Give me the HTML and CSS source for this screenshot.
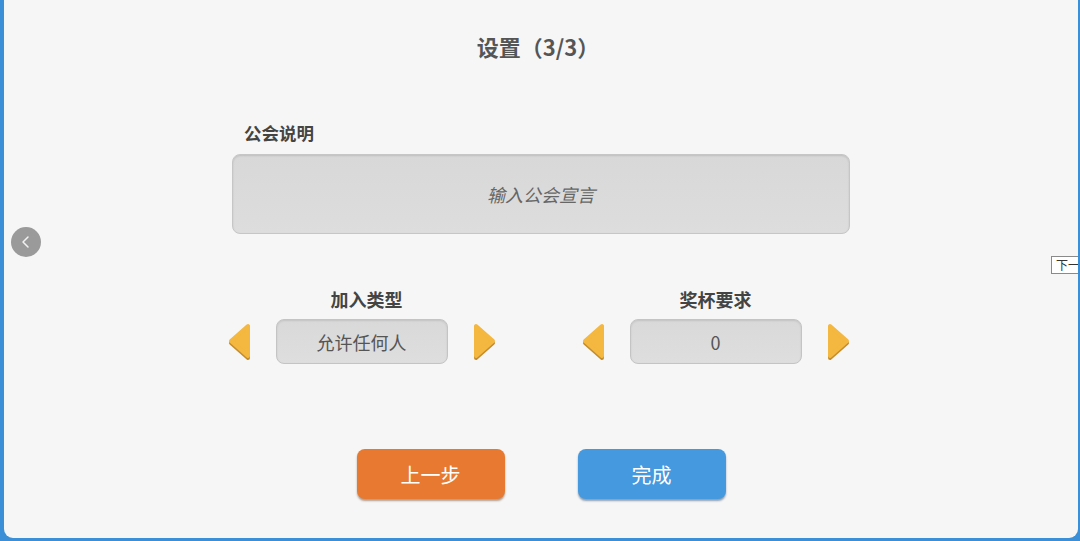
FILE: index.html
```html
<!DOCTYPE html>
<html lang="zh-CN">
<head>
<meta charset="utf-8">
<title>设置（3/3）</title>
<link rel="stylesheet" href="styles.css">
</head>
<body>
<div class="frame">
  <div class="panel">
    <h1 class="title">设置（3/3）</h1>

    <section class="desc">
      <div class="desc-label">公会说明</div>
      <div class="desc-input">输入公会宣言</div>
    </section>

    <div class="selectors">
      <div class="selector selector-join">
        <div class="selector-label">加入类型</div>
        <div class="selector-row">
          <svg class="arrow" viewBox="0 0 24 38" width="24" height="38">
            <polygon class="arrow-shadow" points="4,20 21,5 21,35"/>
            <polygon class="arrow-fill" points="4,18 21,3 21,33"/>
          </svg>
          <div class="selector-box">允许任何人</div>
          <svg class="arrow" viewBox="0 0 24 38" width="24" height="38">
            <polygon class="arrow-shadow" points="20,20 3,5 3,35"/>
            <polygon class="arrow-fill" points="20,18 3,3 3,33"/>
          </svg>
        </div>
      </div>
      <div class="selector">
        <div class="selector-label">奖杯要求</div>
        <div class="selector-row">
          <svg class="arrow" viewBox="0 0 24 38" width="24" height="38">
            <polygon class="arrow-shadow" points="4,20 21,5 21,35"/>
            <polygon class="arrow-fill" points="4,18 21,3 21,33"/>
          </svg>
          <div class="selector-box">0</div>
          <svg class="arrow" viewBox="0 0 24 38" width="24" height="38">
            <polygon class="arrow-shadow" points="20,20 3,5 3,35"/>
            <polygon class="arrow-fill" points="20,18 3,3 3,33"/>
          </svg>
        </div>
      </div>
    </div>

    <div class="actions">
      <button class="btn btn-prev">上一步</button>
      <button class="btn btn-done">完成</button>
    </div>

    <div class="back-btn">
      <svg viewBox="0 0 30 30" width="30" height="30">
        <polyline points="17,10 12,15 17,20" fill="none" stroke="#f2f2f2" stroke-width="1.5" stroke-linecap="round" stroke-linejoin="round"/>
      </svg>
    </div>
    <div class="tooltip">下一步</div>
  </div>
</div>
</body>
</html>
```

FILE: styles.css
```css
* { box-sizing: border-box; }

html, body {
  margin: 0;
  padding: 0;
  width: 1080px;
  height: 541px;
  overflow: hidden;
}

body {
  font-family: "Noto Sans CJK SC", "Noto Sans", sans-serif;
  background: #3b8fd6;
}

.frame {
  width: 1080px;
  height: 541px;
  padding: 0 2px 3px 4px;
  background: #3b8fd6;
}

.panel {
  position: relative;
  height: 100%;
  background: #f6f6f6;
  border-radius: 0 0 9px 9px;
  display: flex;
  flex-direction: column;
  align-items: center;
  overflow: hidden;
}

.title {
  margin: 31px 0 0;
  font-size: 22px;
  line-height: 30px;
  font-weight: 700;
  color: #555;
  letter-spacing: 0;
  margin-left: -6px;
}

.desc {
  margin-top: 60px;
  width: 618px;
}

.desc-label {
  padding-left: 12px;
  font-size: 17.5px;
  line-height: 24px;
  font-weight: 700;
  color: #444;
}

.desc-input {
  margin-top: 9px;
  height: 80px;
  border: 1px solid #c6c6c6;
  border-radius: 8px;
  background: linear-gradient(#d8d8d8, #dddddd);
  box-shadow: inset 0 1px 2px rgba(0,0,0,0.12);
  display: flex;
  align-items: center;
  justify-content: center;
  font-size: 18px;
  font-style: italic;
  color: #666;
}

.selectors {
  margin-top: 53px;
  display: flex;
  gap: 84px;
  margin-left: -5px;
}

.selector {
  display: flex;
  flex-direction: column;
  align-items: center;
}

.selector-join .selector-label {
  padding-left: 10px;
}

.selector-label {
  font-size: 18px;
  line-height: 25px;
  font-weight: 700;
  color: #444;
}

.selector-row {
  margin-top: 7px;
  display: flex;
  align-items: center;
  gap: 25px;
}

.arrow {
  display: block;
  overflow: visible;
}

.arrow-shadow {
  fill: #c48d2c;
  stroke: #c48d2c;
  stroke-width: 4;
  stroke-linejoin: round;
}

.arrow-fill {
  fill: #f4b73f;
  stroke: #f4b73f;
  stroke-width: 4;
  stroke-linejoin: round;
}

.selector-box {
  width: 172px;
  height: 45px;
  border: 1px solid #c4c4c4;
  border-radius: 8px;
  background: linear-gradient(#d9d9d9, #dedede);
  box-shadow: inset 0 1px 2px rgba(0,0,0,0.1);
  display: flex;
  align-items: center;
  justify-content: center;
  font-size: 18px;
  color: #555;
}

.actions {
  margin-top: 85px;
  display: flex;
  gap: 73px;
}

.btn {
  width: 148px;
  height: 50px;
  border: none;
  border-radius: 8px;
  font-family: "Noto Sans CJK SC", "Noto Sans", sans-serif;
  font-size: 20px;
  color: #fff;
  padding: 0;
  cursor: pointer;
}

.btn-prev {
  background: #e77a30;
  box-shadow: 0 2px 2px rgba(90,50,20,0.45);
}

.btn-done {
  background: #4599de;
  box-shadow: 0 2px 2px rgba(20,50,90,0.45);
}

.back-btn {
  position: absolute;
  left: 7px;
  top: 227px;
  width: 30px;
  height: 30px;
  border-radius: 50%;
  background: #9a9a9a;
}

.back-btn svg {
  display: block;
}

.tooltip {
  position: absolute;
  left: 1047px;
  top: 256px;
  height: 18px;
  padding: 0 4px;
  background: #fff;
  border: 1px solid #8a8a8a;
  font-size: 12px;
  line-height: 16px;
  color: #333;
  white-space: nowrap;
}
```
